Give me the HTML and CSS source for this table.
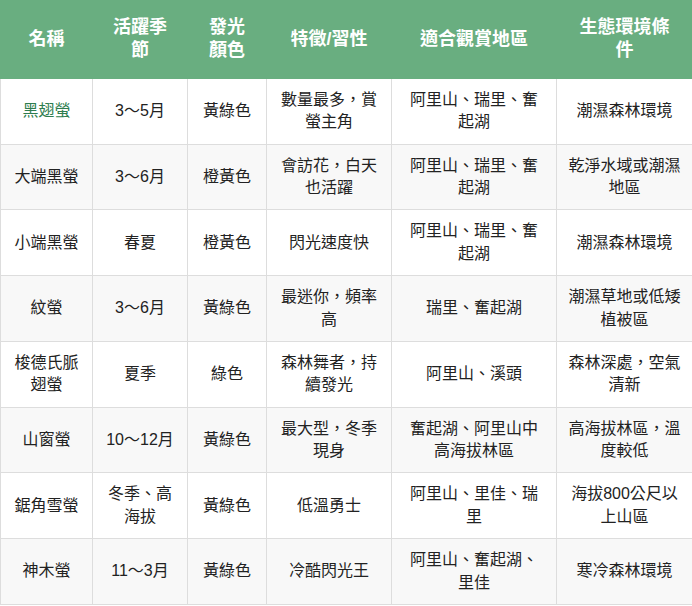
FILE: index.html
```html
<!DOCTYPE html>
<html lang="zh-Hant">
<head>
<meta charset="utf-8">
<title>螢火蟲</title>
<link rel="stylesheet" href="styles.css">
</head>
<body>
<table class="firefly-table">
  <colgroup>
    <col class="c1"><col class="c2"><col class="c3"><col class="c4"><col class="c5"><col class="c6">
  </colgroup>
  <thead>
    <tr>
      <th>名稱</th>
      <th>活躍季節</th>
      <th>發光顏色</th>
      <th>特徵/習性</th>
      <th>適合觀賞地區</th>
      <th>生態環境條件</th>
    </tr>
  </thead>
  <tbody>
    <tr>
      <td class="highlight">黑翅螢</td>
      <td>3～5月</td>
      <td>黃綠色</td>
      <td>數量最多，賞螢主角</td>
      <td>阿里山、瑞里、奮起湖</td>
      <td>潮濕森林環境</td>
    </tr>
    <tr>
      <td>大端黑螢</td>
      <td>3～6月</td>
      <td>橙黃色</td>
      <td>會訪花，白天也活躍</td>
      <td>阿里山、瑞里、奮起湖</td>
      <td>乾淨水域或潮濕地區</td>
    </tr>
    <tr>
      <td>小端黑螢</td>
      <td>春夏</td>
      <td>橙黃色</td>
      <td>閃光速度快</td>
      <td>阿里山、瑞里、奮起湖</td>
      <td>潮濕森林環境</td>
    </tr>
    <tr>
      <td>紋螢</td>
      <td>3～6月</td>
      <td>黃綠色</td>
      <td>最迷你，頻率高</td>
      <td>瑞里、奮起湖</td>
      <td>潮濕草地或低矮植被區</td>
    </tr>
    <tr>
      <td>梭德氏脈翅螢</td>
      <td>夏季</td>
      <td>綠色</td>
      <td>森林舞者，持續發光</td>
      <td>阿里山、溪頭</td>
      <td>森林深處，空氣清新</td>
    </tr>
    <tr>
      <td>山窗螢</td>
      <td>10～12月</td>
      <td>黃綠色</td>
      <td>最大型，冬季現身</td>
      <td>奮起湖、阿里山中高海拔林區</td>
      <td>高海拔林區，溫度較低</td>
    </tr>
    <tr>
      <td>鋸角雪螢</td>
      <td>冬季、高海拔</td>
      <td>黃綠色</td>
      <td>低溫勇士</td>
      <td>阿里山、里佳、瑞里</td>
      <td>海拔800公尺以上山區</td>
    </tr>
    <tr>
      <td>神木螢</td>
      <td>11～3月</td>
      <td>黃綠色</td>
      <td>冷酷閃光王</td>
      <td>阿里山、奮起湖、里佳</td>
      <td>寒冷森林環境</td>
    </tr>
  </tbody>
</table>
</body>
</html>
```
FILE: styles.css
```css
html, body {
  margin: 0;
  padding: 0;
  background: #ffffff;
}

body {
  font-family: "Liberation Sans", "Noto Sans CJK TC", sans-serif;
  color: #222;
}

.firefly-table {
  width: 692px;
  table-layout: fixed;
  border-collapse: collapse;
  box-shadow: 0 2px 3px rgba(0, 0, 0, 0.18);
}

.c1 { width: 92px; }
.c2 { width: 95px; }
.c3 { width: 79px; }
.c4 { width: 125px; }
.c5 { width: 165px; }
.c6 { width: 136px; }

.firefly-table th {
  background: #69ae80;
  color: #ffffff;
  font-weight: bold;
  font-size: 18px;
  line-height: 1.3;
  padding: 15px 15px;
  border: 1px solid #69ae80;
  text-align: center;
  vertical-align: middle;
}

.firefly-table td {
  font-size: 16px;
  line-height: 1.4;
  padding: 10px 10.5px;
  border: 1px solid #dddddd;
  text-align: center;
  vertical-align: middle;
}

.firefly-table tbody tr:nth-child(even) {
  background: #f8f8f8;
}

.firefly-table td.highlight {
  color: #2e7d4f;
}
```
